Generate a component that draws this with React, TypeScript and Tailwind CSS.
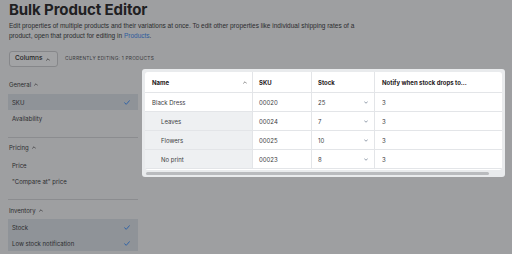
import React from 'react'

const rows = [
    { name: 'Black Dress', sku: '00020', stock: '25', notify: '3', sub: false },
    { name: 'Leaves', sku: '00024', stock: '7', notify: '3', sub: true },
    { name: 'Flowers', sku: '00025', stock: '10', notify: '3', sub: true },
    { name: 'No print', sku: '00023', stock: '8', notify: '3', sub: true },
]

function Caret({ down = false, className = '' }: { down?: boolean, className?: string }) {
    return (
        <svg viewBox="0 0 8 5" className={className} fill="none" stroke="currentColor" strokeWidth="1.3" strokeLinecap="round" strokeLinejoin="round">
            {down ? <polyline points="1,1 4,4 7,1" /> : <polyline points="1,4 4,1 7,4" />}
        </svg>
    )
}

function Check() {
    return (
        <svg viewBox="0 0 10 8" className="w-[6px] h-[5px] text-[#2f62a6]" fill="none" stroke="currentColor" strokeWidth="1.6" strokeLinecap="round" strokeLinejoin="round">
            <polyline points="1,4.5 3.8,7 9,1" />
        </svg>
    )
}

function SideItem({ label, checked }: { label: string, checked?: boolean }) {
    return (
        <div className={`h-[16px] flex items-center justify-between pl-[4px] pr-[8px] ${checked ? 'bg-[#8f9398]' : ''}`}>
            <span>{label}</span>
            {checked && <Check />}
        </div>
    )
}

function SideHeader({ label }: { label: string }) {
    return (
        <div className="h-[12px] flex items-center gap-[3px] pl-[1px]">
            <span>{label}</span>
            <Caret className="w-[4px] h-[3px]" />
        </div>
    )
}

export default function App() {
    return (
        <div className="w-[512px] h-[254px] overflow-hidden bg-[#9e9fa1] text-[#2b2c2e]" style={{ fontFamily: 'Inter, "Liberation Sans", sans-serif' }}>
            <div className="pl-[9px] pt-[1px]">
                <h1 className="text-[15px] leading-[18px] font-bold text-[#1f2022] tracking-[-0.1px]">Bulk Product Editor</h1>
                <p className="mt-[2px] w-[352px] text-[6.5px] leading-[9.5px] text-[#2b2c2e] font-['Liberation_Sans',sans-serif]">
                    Edit properties of multiple products and their variations at once. To edit other properties like individual shipping rates of a product, open that product for editing in <span className="text-[#2d5c9e]">Products</span>.
                </p>
                <div className="mt-[11px] flex items-center gap-[7px]">
                    <div className="w-[49px] h-[16px] rounded-[3px] border border-[#86878a] bg-[#a2a3a5] flex items-center justify-between pl-[5px] pr-[7px] text-[6.5px] font-medium text-[#222]">
                        <span>Columns</span>
                        <Caret className="w-[4px] h-[3px]" />
                    </div>
                    <span className="text-[4.8px] tracking-[0.25px] uppercase text-[#3a3b3d]">Currently editing: 1 products</span>
                </div>
            </div>

            <div className="mt-[2px] flex">
                <div className="w-[130px] ml-[8px] pt-[9px] text-[6px] flex flex-col">
                    <SideHeader label="General" />
                    <div className="mt-[4px]">
                        <SideItem label="SKU" checked />
                        <SideItem label="Availability" />
                    </div>
                    <div className="mt-[11px] border-t border-[#8b8c8f]" />
                    <div className="mt-[3px]"><SideHeader label="Pricing" /></div>
                    <div className="mt-[4px]">
                        <SideItem label="Price" />
                        <SideItem label={'"Compare at" price'} />
                    </div>
                    <div className="mt-[10px] border-t border-[#8b8c8f]" />
                    <div className="mt-[4px]"><SideHeader label="Inventory" /></div>
                    <div className="mt-[3px]">
                        <SideItem label="Stock" checked />
                        <SideItem label="Low stock notification" checked />
                    </div>
                </div>

                <div className="ml-[4px] w-[363px] h-[108px] bg-[#e9ebed] rounded-[3px] p-[3px] pb-0">
                    <div className="bg-white rounded-[3px] overflow-hidden text-[6px] text-[#3c3d3f]">
                        <div className="grid grid-cols-[108px_59px_63px_127px] h-[21px] border-b border-[#e3e5e8] font-bold text-[#1f2022]">
                            <div className="flex items-center justify-between pl-[7px] pr-[5px] border-r border-[#e3e5e8]">
                                <span>Name</span>
                                <Caret className="w-[4px] h-[3px] text-[#555]" />
                            </div>
                            <div className="flex items-center pl-[6px] border-r border-[#e3e5e8]">SKU</div>
                            <div className="flex items-center pl-[6px] border-r border-[#e3e5e8]">Stock</div>
                            <div className="flex items-center pl-[7px]">Notify when stock drops to...</div>
                        </div>
                        {rows.map(r => (
                            <div key={r.sku} className="grid grid-cols-[108px_59px_63px_127px] h-[19px] border-b border-[#e3e5e8] last:border-b-0">
                                <div className={`flex items-center border-r border-[#e3e5e8] ${r.sub ? 'pl-[16px] bg-[#eef0f2]' : 'pl-[7px]'}`}>{r.name}</div>
                                <div className="flex items-center pl-[6px] border-r border-[#e3e5e8]">{r.sku}</div>
                                <div className="flex items-center justify-between pl-[6px] pr-[6px] border-r border-[#e3e5e8]">
                                    <span>{r.stock}</span>
                                    <Caret down className="w-[4px] h-[3px] text-[#5b6b80]" />
                                </div>
                                <div className="flex items-center pl-[7px]">{r.notify}</div>
                            </div>
                        ))}
                        <div className="h-[1px]" />
                    </div>
                    <div className="mt-[2px] ml-[1px] w-[343px] h-[3px] rounded-full bg-[#b9bbbe]" />
                </div>
            </div>
        </div>
    )
}
